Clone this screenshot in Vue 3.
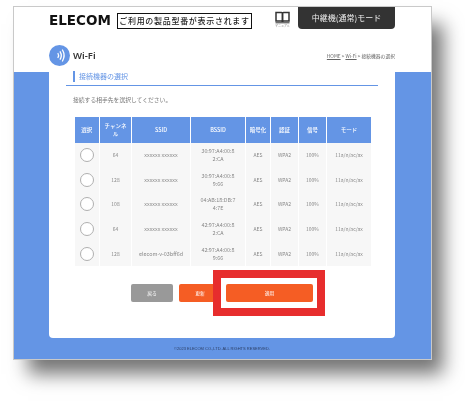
<script setup>
const columns = [
  { label: '選択', width: 25.5 },
  { label: 'チャンネル', width: 32 },
  { label: 'SSID', width: 59 },
  { label: 'BSSID', width: 55 },
  { label: '暗号化', width: 25 },
  { label: '認証', width: 28 },
  { label: '信号', width: 28 },
  { label: 'モード', width: 45 },
]

const rows = [
  { channel: 64, ssid: 'xxxxxx xxxxxx', bssid: ['30:97:A4:00:8', '2:CA'] },
  { channel: 128, ssid: 'xxxxxx xxxxxx', bssid: ['30:97:A4:00:8', '9:66'] },
  { channel: 108, ssid: 'xxxxxx xxxxxx', bssid: ['04:AB:18:DB:7', '4:7E'] },
  { channel: 64, ssid: 'xxxxxx xxxxxx', bssid: ['42:97:A4:00:8', '2:CA'] },
  { channel: 128, ssid: 'elecom-v-03bff6d', bssid: ['42:97:A4:00:8', '9:66'] },
]
</script>

<template>
  <div class="page">
    <div class="window">
      <div class="card">
        <header class="top">
          <span class="logo">ELECOM</span>
          <span class="model">ご利用の製品型番が表示されます</span>
          <div class="manual">
            <svg width="15" height="13" viewBox="0 0 15 13" fill="none" stroke="#333" stroke-width="1.5">
              <path d="M1 1.500h5.500q1 0 1 1v8.500q0-1-1-1H1z" />
              <path d="M14 1.500H8.500q-1 0-1 1v8.500q0-1 1-1H14z" />
              <path d="M0.500 11.800h14" stroke-width="1" />
            </svg>
            <span>マニュアル</span>
          </div>
          <div class="mode">中継機(通常)モード</div>
        </header>

        <div class="title-row">
          <div class="title-left">
            <span class="wifi-icon">
              <svg width="21" height="21" viewBox="0 0 21 21" fill="none" stroke="#fff" stroke-width="1.300" stroke-linecap="round">
                <path d="M9 8.500q1.200 2 0 4" />
                <path d="M11.200 6.800q2.200 3.700 0 7.400" />
                <path d="M13.500 5q3.200 5.500 0 11" />
              </svg>
            </span>
            <span class="title">Wi-Fi</span>
          </div>
          <div class="crumbs"><u>HOME</u> &gt; <u>Wi-Fi</u> &gt; 接続機器の選択</div>
        </div>

        <section class="body">
          <h2 class="heading"><span>接続機器の選択</span></h2>
          <p class="lead">接続する相手先を選択してください。</p>

          <table class="list">
            <thead>
              <tr>
                <th v-for="col in columns" :key="col.label" :style="{ width: col.width + 'px' }">{{ col.label }}</th>
              </tr>
            </thead>
            <tbody>
              <tr v-for="(row, i) in rows" :key="i">
                <td><span class="radio"></span></td>
                <td>{{ row.channel }}</td>
                <td class="wide">{{ row.ssid }}</td>
                <td class="wide">{{ row.bssid[0] }}<br />{{ row.bssid[1] }}</td>
                <td>AES</td>
                <td>WPA2</td>
                <td>100%</td>
                <td>11a/n/ac/ax</td>
              </tr>
            </tbody>
          </table>

          <div class="actions">
            <button class="btn btn--back">戻る</button>
            <button class="btn btn--update">更新</button>
            <button class="btn btn--apply">
              適用
              <span class="highlight"></span>
            </button>
          </div>
        </section>
      </div>
      <footer class="copy">©2023 ELECOM CO.,LTD. ALL RIGHTS RESERVED.</footer>
    </div>
  </div>
</template>

<style scoped>
.page {
  height: 401px;
  box-sizing: border-box;
  padding: 7px 34px 0 14px;
  overflow: hidden;
  font-family: "Noto Sans CJK JP", "Noto Sans", sans-serif;
}

.window {
  width: 417px;
  height: 352px;
  box-sizing: border-box;
  padding: 0 36px 0 35px;
  background: linear-gradient(#fff 65px, #6495e5 65px);
  outline: 1px solid #c9c9c9;
  box-shadow: 13px 16px 18px -1px rgba(0, 0, 0, 0.55);
  filter: blur(0.6px);
}

.card {
  height: 331px;
  box-sizing: border-box;
  background: #fff;
  border-radius: 0 0 4px 4px;
}

.top {
  display: flex;
  align-items: flex-start;
  height: 38px;
}

.logo {
  margin-top: 5px;
  width: 63px;
  flex: none;
  font-family: "DejaVu Sans", sans-serif;
  font-weight: 700;
  font-size: 13.500px;
  line-height: 16px;
  white-space: nowrap;
  color: #111;
}

.model {
  margin: 6px 0 0 5px;
  width: 135px;
  flex: none;
  height: 16px;
  box-sizing: border-box;
  border: 1px solid #111;
  font-size: 8px;
  font-weight: 500;
  line-height: 14px;
  letter-spacing: 0.700px;
  text-align: center;
  white-space: nowrap;
  color: #222;
}

.manual {
  margin: 4px 0 0 16.500px;
  width: 28px;
  flex: none;
  display: flex;
  flex-direction: column;
  align-items: center;
  font-size: 3px;
  line-height: 4px;
  color: #888;
}

.mode {
  margin-left: 1.500px;
  width: 97px;
  flex: none;
  height: 22px;
  background: #333;
  border-radius: 0 0 4px 4px;
  color: #eee;
  font-size: 8px;
  line-height: 22px;
  text-align: center;
}

.title-row {
  display: flex;
  align-items: center;
  justify-content: space-between;
  height: 21px;
}

.title-left {
  display: flex;
  align-items: center;
  gap: 3px;
}

.wifi-icon {
  display: block;
  width: 21px;
  height: 21px;
  border-radius: 50%;
  background: #6495e5;
}

.wifi-icon svg {
  display: block;
}

.title {
  font-family: "Noto Sans", sans-serif;
  font-size: 9.500px;
  font-weight: 600;
  color: #333;
}

.crumbs {
  font-size: 4.800px;
  color: #666;
}

.body {
  padding: 5px 17px 0;
}

.heading {
  margin: 0;
  padding: 0 0 3px 7px;
  border-bottom: 1px solid #6495e5;
  font-size: 7px;
  font-weight: 400;
  line-height: 11px;
  color: #6495e5;
}

.heading span {
  display: block;
  padding-left: 4px;
  border-left: 2px solid #6495e5;
}

.lead {
  margin: 9px 0 0 7px;
  font-size: 5.800px;
  line-height: 10px;
  color: #777;
}

.list {
  margin: 12px 0 0 7.500px;
  width: 297.500px;
  table-layout: fixed;
  border-collapse: collapse;
}

.list th {
  box-sizing: border-box;
  height: 26px;
  padding: 0 3px;
  background: #6495e5;
  border: 1px solid #fff;
  border-width: 0 1px;
  color: #fff;
  font-size: 5.500px;
  font-weight: 500;
  line-height: 8px;
}

.list td {
  box-sizing: border-box;
  height: 24.600px;
  padding: 0 1px;
  background: #f7f7f7;
  border: 1px solid #fff;
  border-width: 0 1px;
  color: #888;
  font-size: 5px;
  line-height: 8px;
  text-align: center;
}

.list td.wide {
  font-size: 5.400px;
}

.radio {
  display: block;
  width: 14px;
  height: 14px;
  margin: 0 auto;
  box-sizing: border-box;
  border: 1.200px solid #b0b0b0;
  border-radius: 50%;
  background: #fff;
}

.actions {
  display: flex;
  justify-content: center;
  gap: 6px;
  margin-top: 18px;
}

.btn {
  position: relative;
  height: 18px;
  padding: 0;
  border: 0;
  border-radius: 2px;
  color: #fff;
  font-family: inherit;
  font-size: 4.800px;
}

.btn--back {
  width: 42px;
  background: #999;
}

.btn--update {
  width: 42px;
  background: #f55d24;
}

.btn--apply {
  width: 87px;
  margin-left: -1px;
  background: #f55d24;
}

.highlight {
  position: absolute;
  left: -13px;
  top: -14px;
  width: 112px;
  height: 46px;
  box-sizing: border-box;
  border: 8px solid #e72d2d;
  pointer-events: none;
}

.copy {
  margin-top: 8px;
  font-family: "Liberation Sans", sans-serif;
  font-size: 4px;
  line-height: 6px;
  text-align: center;
  color: #2c3f66;
}
</style>
